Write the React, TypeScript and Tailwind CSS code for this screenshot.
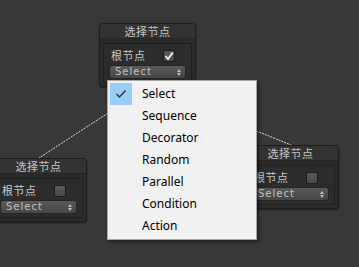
import React from "react";

const cjk = { fontFamily: '"Noto Sans CJK SC", "Noto Sans", sans-serif' };

function Node({ className, checked }: { className: string; checked?: boolean }) {
  return (
    <div
      className={`absolute w-[97px] h-[64px] rounded-[4px] bg-[#2a2a2a] border border-[#1e1e1e] shadow-[0_1px_2px_rgba(0,0,0,0.5)] ${className}`}
    >
      <div className="h-[15px] rounded-t-[3px] bg-[#333333] border-b border-[#262626] flex items-center justify-center">
        <span className="text-[11px] leading-none text-[#c4c4c4] tracking-[0.5px]" style={cjk}>
          选择节点
        </span>
      </div>
      <div className="mx-[3px] mt-[4px] h-[40px] border border-[#1f1f1f] bg-[#2c2c2c] px-[5px] pt-[5px]">
        <div className="flex items-center h-[13px]">
          <span className="ml-[2px] text-[11px] leading-none text-[#c8c8c8] tracking-[0.5px]" style={cjk}>
            根节点
          </span>
          <div className="ml-auto mr-[11px] w-[12px] h-[12px] rounded-[2px] border border-[#1c1c1c] bg-gradient-to-b from-[#5a5a5a] to-[#484848] flex items-center justify-center">
            {checked && (
              <svg width="10" height="10" viewBox="0 0 10 10">
                <path d="M1.5 5.2 L4 8 L8.8 1.5" fill="none" stroke="#f2f2f2" strokeWidth="1.8" />
              </svg>
            )}
          </div>
        </div>
        <div className="mt-[3px] h-[14px] rounded-[3px] border border-[#252525] bg-gradient-to-b from-[#5a5a5a] to-[#454545] flex items-center pl-[5px] pr-[4px]">
          <span
            className="text-[10px] leading-none text-[#c2c2c2] tracking-[1px]"
            style={{ fontFamily: '"DejaVu Sans", sans-serif' }}
          >
            Select
          </span>
          <div className="ml-auto flex flex-col items-center gap-[1px]">
            <div className="w-0 h-0 border-l-[2px] border-r-[2px] border-b-[3px] border-l-transparent border-r-transparent border-b-[#bcbcbc]" />
            <div className="w-0 h-0 border-l-[2px] border-r-[2px] border-t-[3px] border-l-transparent border-r-transparent border-t-[#bcbcbc]" />
          </div>
        </div>
      </div>
    </div>
  );
}

const items = ["Select", "Sequence", "Decorator", "Random", "Parallel", "Condition", "Action"];

export default function App() {
  return (
    <div className="relative w-[359px] h-[267px] overflow-hidden bg-[#383838]">
      <svg className="absolute inset-0" width="359" height="267">
        <line x1="148" y1="87" x2="39" y2="158" stroke="#d8d8d8" strokeWidth="1" strokeDasharray="2 1" />
        <line x1="148" y1="87" x2="291" y2="145" stroke="#d8d8d8" strokeWidth="1" strokeDasharray="2 1" />
      </svg>
      <Node className="left-[99px] top-[23px]" checked />
      <Node className="left-[-10px] top-[158px]" />
      <Node className="left-[242px] top-[145px]" />

      <div
        className="absolute left-[107px] top-[80px] w-[150px] h-[160px] bg-[#f1f1f1] border border-[#a6a6a6] shadow-[2px_2px_3px_rgba(0,0,0,0.45)] py-[2px] pl-[2px]"
        style={{ fontFamily: '"Noto Sans", sans-serif' }}
      >
        {items.map((it, i) => (
          <div key={it} className="flex items-center h-[22px]">
            <div className={`w-[22px] h-[22px] flex items-center justify-center ${i === 0 ? "bg-[#99ccf7]" : ""}`}>
              {i === 0 && (
                <svg width="12" height="10" viewBox="0 0 12 10">
                  <path d="M1.5 5 L4.5 8 L10.5 1.5" fill="none" stroke="#333" strokeWidth="1.4" />
                </svg>
              )}
            </div>
            <span className="ml-[10px] text-[12px] leading-none text-black">{it}</span>
          </div>
        ))}
      </div>
    </div>
  );
}
